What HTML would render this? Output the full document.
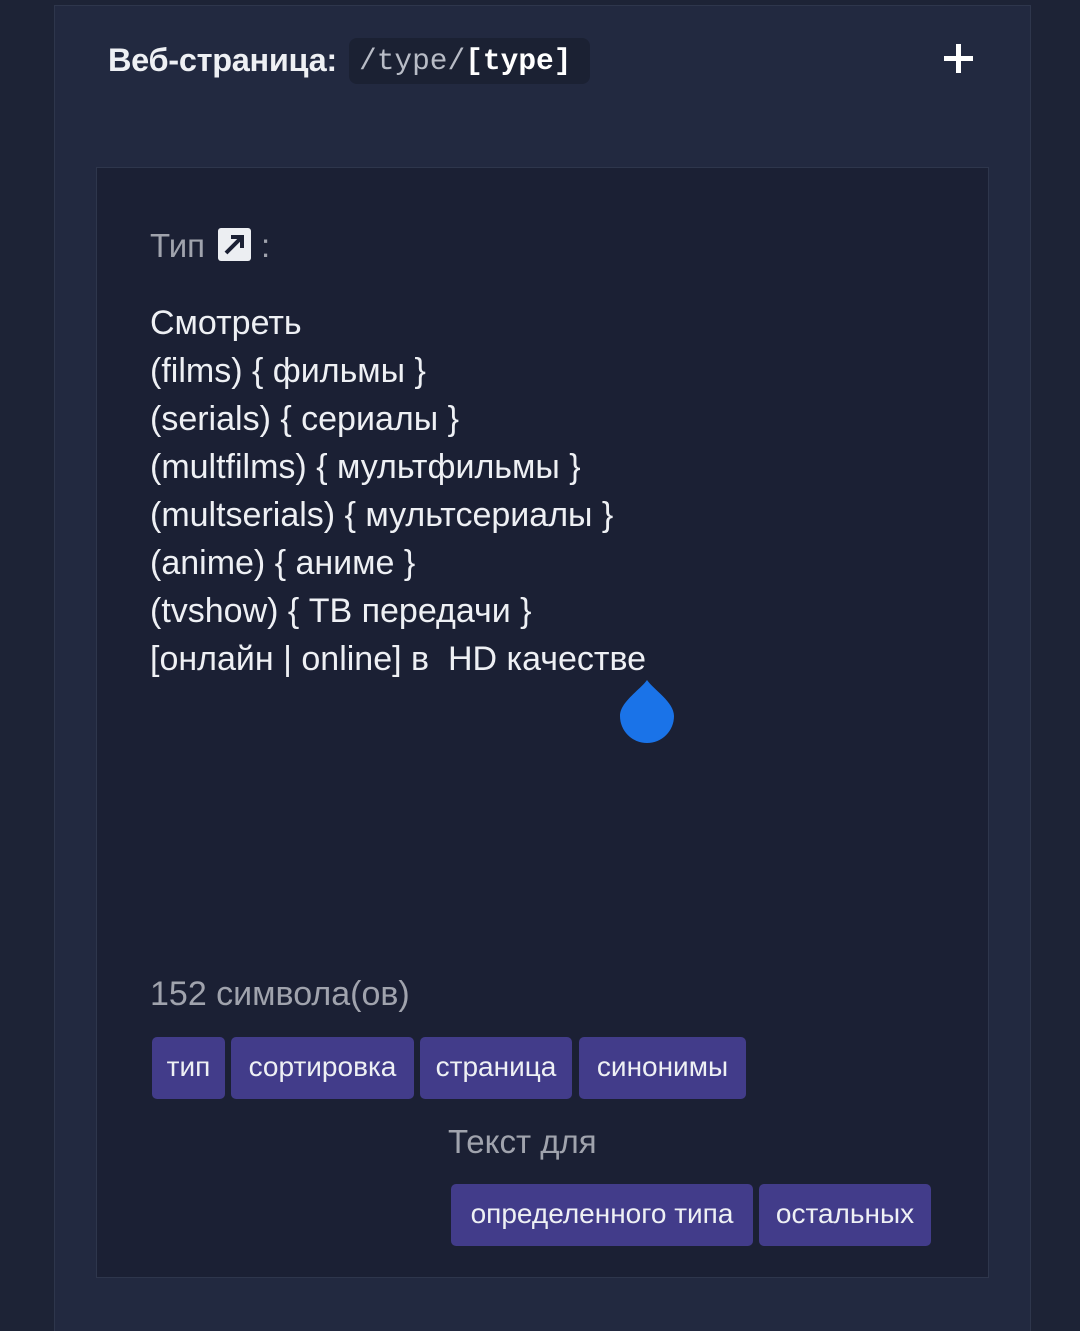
<!DOCTYPE html>
<html style="overflow:hidden;height:1331px"><head><meta charset="utf-8"><style>
body{margin:0;width:1080px;height:1331px;background:#1d2336;font-family:"Liberation Sans",sans-serif;position:relative;overflow:hidden}
.outer{position:absolute;left:54px;top:5px;width:975px;height:1326px;background:#222940;border:1px solid #2e364c;border-bottom:none}
.title{position:absolute;left:108px;top:37px;font-size:32.5px;font-weight:bold;color:#eef0f4;line-height:46px;letter-spacing:-0.3px}
.code{position:absolute;left:349px;top:38px;width:231px;height:46px;padding-left:10px;background:#1b2133;border-radius:8px;font-family:"Liberation Mono",monospace;font-size:29.5px;line-height:46px;color:#b8bcc6}
.code b{color:#fff}
.plus{position:absolute;left:944px;top:44px;width:29px;height:29px}
.plus:before{content:"";position:absolute;left:0;top:12px;width:29px;height:5px;background:#fff}
.plus:after{content:"";position:absolute;left:12px;top:0;width:5px;height:29px;background:#fff}
.inner{position:absolute;left:96px;top:167px;width:891px;height:1109px;background:#1b2034;border:1px solid #2e364c}
.lbl{position:absolute;left:150px;top:226px;font-size:33px;color:#a0a3ad;line-height:40px}
.colon{position:absolute;left:261px;top:226px;font-size:33px;color:#a0a3ad;line-height:40px}
.icon{position:absolute;left:218px;top:228px;width:33px;height:33px;background:#eceef2;border-radius:3px}
.txt{position:absolute;left:150px;top:299px;font-size:34px;line-height:48px;color:#eef0f4}
.drop{position:absolute;left:620px;top:680px}
.cnt{position:absolute;left:150px;top:974px;font-size:34px;color:#a0a3ad;line-height:40px}
.chip{position:absolute;height:62px;background:#423c8a;border-radius:5px;color:#eef0f4;font-size:28px;line-height:60px;text-align:center}
.tl{position:absolute;left:448px;top:1122px;font-size:33px;color:#a0a3ad;line-height:40px}
</style></head><body>
<div class="outer"></div>
<div class="title">Веб-страница:</div>
<div class="code">/type/<b>[type]</b></div>
<div class="plus"></div>
<div class="inner"></div>
<div class="lbl">Тип</div>
<div class="colon">:</div>
<div class="icon"><svg width="33" height="33" viewBox="0 0 33 33"><path d="M8 25 L23 10 M13 9 H24 V20" stroke="#1b2034" stroke-width="4" fill="none"/></svg></div>
<div class="txt">Смотреть<br>(films) { фильмы }<br>(serials) { сериалы }<br>(multfilms) { мультфильмы }<br>(multserials) { мультсериалы }<br>(anime) { аниме }<br>(tvshow) { ТВ передачи }<br>[онлайн | online] в &nbsp;HD качестве</div>
<svg class="drop" width="54" height="63" viewBox="0 0 54 63"><path d="M27 0 C20 10 0 22 0 36 A27 27 0 0 0 54 36 C54 22 34 10 27 0Z" fill="#1a73e8"/></svg>
<div class="cnt">152 символа(ов)</div>
<div class="chip" style="left:152px;top:1037px;width:73px">тип</div>
<div class="chip" style="left:231px;top:1037px;width:183px">сортировка</div>
<div class="chip" style="left:420px;top:1037px;width:152px">страница</div>
<div class="chip" style="left:579px;top:1037px;width:167px">синонимы</div>
<div class="tl">Текст для</div>
<div class="chip" style="left:451px;top:1184px;width:302px">определенного типа</div>
<div class="chip" style="left:759px;top:1184px;width:172px">остальных</div>
</body></html>
